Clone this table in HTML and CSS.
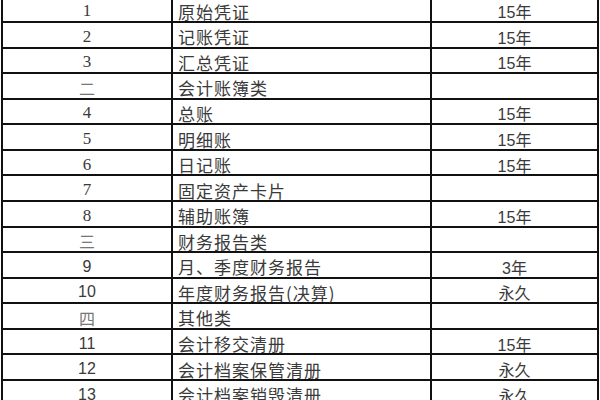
FILE: index.html
```html
<!DOCTYPE html>
<html lang="zh">
<head>
<meta charset="utf-8">
<link rel="stylesheet" href="styles.css">
</head>
<body>
<div class="sheet">
  <div class="c num serif">1</div><div class="c name">原始凭证</div><div class="c term">15年</div>
  <div class="c num serif">2</div><div class="c name">记账凭证</div><div class="c term">15年</div>
  <div class="c num serif">3</div><div class="c name">汇总凭证</div><div class="c term">15年</div>
  <div class="c num cjk">二</div><div class="c name">会计账簿类</div><div class="c term"></div>
  <div class="c num serif">4</div><div class="c name">总账</div><div class="c term">15年</div>
  <div class="c num serif">5</div><div class="c name">明细账</div><div class="c term">15年</div>
  <div class="c num serif">6</div><div class="c name">日记账</div><div class="c term">15年</div>
  <div class="c num serif">7</div><div class="c name">固定资产卡片</div><div class="c term"></div>
  <div class="c num serif">8</div><div class="c name">辅助账簿</div><div class="c term">15年</div>
  <div class="c num cjk">三</div><div class="c name">财务报告类</div><div class="c term"></div>
  <div class="c num">9</div><div class="c name">月、季度财务报告</div><div class="c term">3年</div>
  <div class="c num">10</div><div class="c name">年度财务报告(决算)</div><div class="c term">永久</div>
  <div class="c num cjk">四</div><div class="c name">其他类</div><div class="c term"></div>
  <div class="c num">11</div><div class="c name">会计移交清册</div><div class="c term">15年</div>
  <div class="c num">12</div><div class="c name">会计档案保管清册</div><div class="c term">永久</div>
  <div class="c num">13</div><div class="c name">会计档案销毁清册</div><div class="c term">永久</div>
</div>
</body>
</html>
```
FILE: styles.css
```css
html, body {
  margin: 0;
  padding: 0;
  background: #ffffff;
  overflow: hidden;
  width: 600px;
  height: 400px;
}

.sheet {
  display: grid;
  grid-template-columns: 170px 259px 167px;
  grid-auto-rows: 25.57px;
  margin-top: -2.57px;
  margin-left: 1px;
  border-left: 2px solid #111;
  width: 596px;
  font-family: "Liberation Sans", "Noto Sans CJK SC", sans-serif;
  color: #3a3a3a;
}

.c {
  box-sizing: border-box;
  border-right: 2px solid #111;
  border-bottom: 2px solid #111;
  display: flex;
  align-items: center;
  padding-top: 4px;
  font-size: 16px;
  white-space: nowrap;
}

.num {
  justify-content: center;
}

.num.serif {
  font-family: "Liberation Serif", "Noto Sans CJK SC", serif;
  font-size: 17px;
}

.num.cjk {
  font-family: "Noto Sans CJK SC", sans-serif;
  font-size: 16px;
  color: #777;
}

.name {
  font-family: "Noto Sans CJK SC", sans-serif;
  font-size: 17px;
  letter-spacing: 1px;
  padding-left: 5px;
}

.term {
  justify-content: center;
  font-size: 16px;
}
```
